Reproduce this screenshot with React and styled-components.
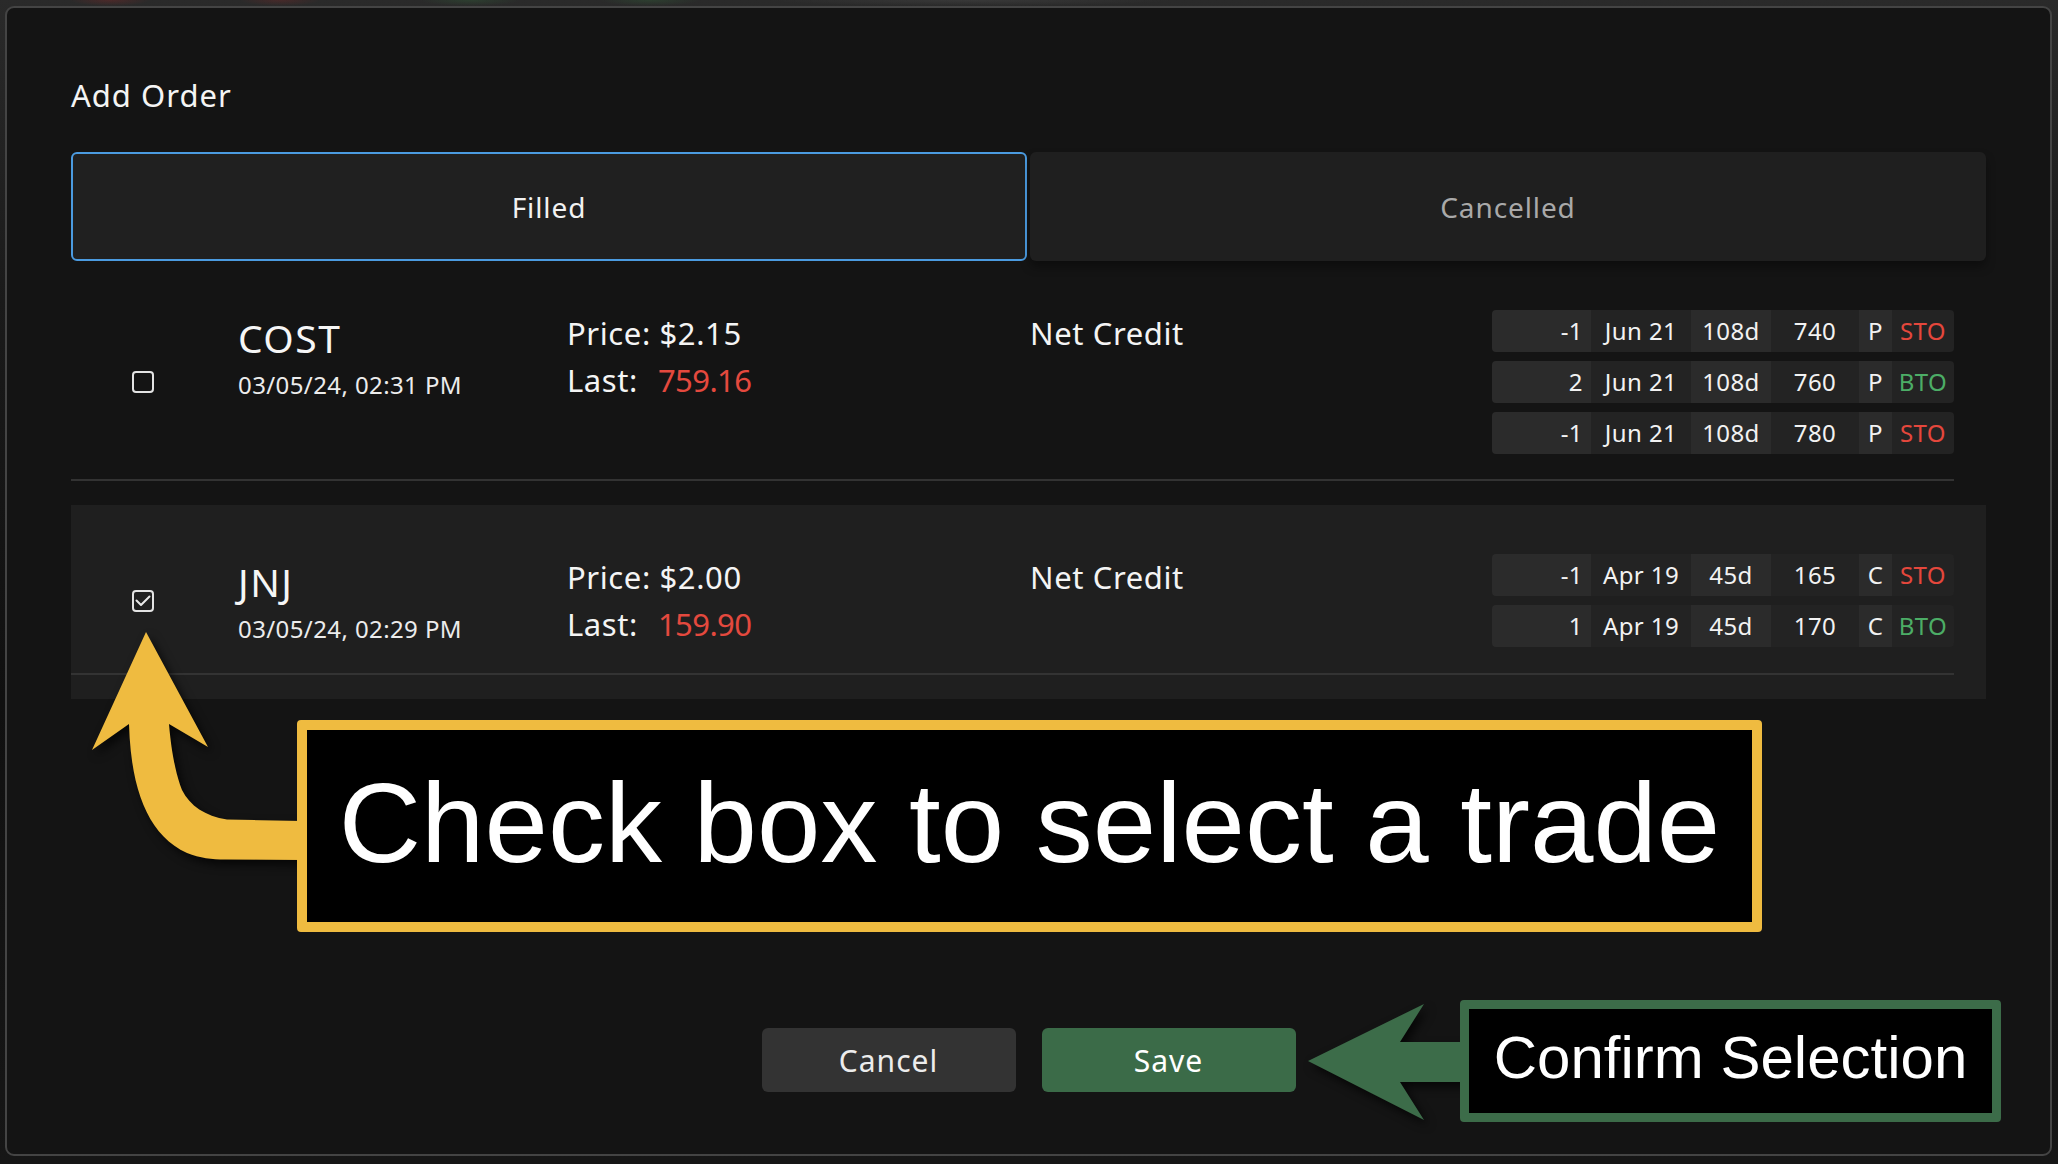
import React, { useState } from 'react'
import styled, { createGlobalStyle, css } from 'styled-components'

const GlobalStyle = createGlobalStyle`
  html, body {
    margin: 0;
    padding: 0;
    background: #0d0d0d;
  }
  * {
    box-sizing: border-box;
  }
  body {
    font-family: "Noto Sans", "Open Sans", sans-serif;
    color: #f0f0f0;
  }
`

const orders = [
  {
    id: 'cost',
    ticker: 'COST',
    time: '03/05/24, 02:31 PM',
    price: '$2.15',
    last: '759.16',
    kind: 'Net Credit',
    legs: [
      { qty: '-1', exp: 'Jun 21', dte: '108d', strike: '740', type: 'P', action: 'STO' },
      { qty: '2', exp: 'Jun 21', dte: '108d', strike: '760', type: 'P', action: 'BTO' },
      { qty: '-1', exp: 'Jun 21', dte: '108d', strike: '780', type: 'P', action: 'STO' },
    ],
  },
  {
    id: 'jnj',
    ticker: 'JNJ',
    time: '03/05/24, 02:29 PM',
    price: '$2.00',
    last: '159.90',
    kind: 'Net Credit',
    legs: [
      { qty: '-1', exp: 'Apr 19', dte: '45d', strike: '165', type: 'C', action: 'STO' },
      { qty: '1', exp: 'Apr 19', dte: '45d', strike: '170', type: 'C', action: 'BTO' },
    ],
  },
]

const AddOrder = () => {
  const [activeTab, setActiveTab] = useState('Filled')
  const [selected, setSelected] = useState('jnj')
  const tabs = ['Filled', 'Cancelled']

  return (
    <Page>
      <GlobalStyle />
      <Dialog>
        <Title>Add Order</Title>

        <Tabs>
          {tabs.map(tab => (
            <Tab key={tab} $active={activeTab === tab} onClick={() => setActiveTab(tab)}>{tab}</Tab>
          ))}
        </Tabs>

        <OrderList>
          {orders.map(order => (
            <OrderRow key={order.id} $selected={selected === order.id}>
              <RowBody>
                <CheckBox $checked={selected === order.id} onClick={() => setSelected(order.id)}>
                  {selected === order.id && (
                    <svg viewBox="0 0 22 22" width="22" height="22">
                      <polyline points="4.5,10.5 9,15 17.5,6.5" fill="none" stroke="#e8e8e8" strokeWidth="2" strokeLinecap="round" strokeLinejoin="round" />
                    </svg>
                  )}
                </CheckBox>

                <TickerCol>
                  <Ticker>{order.ticker}</Ticker>
                  <Time>{order.time}</Time>
                </TickerCol>

                <PriceCol>
                  <div>Price: {order.price}</div>
                  <div>Last:<LastValue>{order.last}</LastValue></div>
                </PriceCol>

                <PriceCol>
                  <div>{order.kind}</div>
                </PriceCol>

                <Legs>
                  {order.legs.map((leg, i) => (
                    <Leg key={i}>
                      <Cell $align="right">{leg.qty}</Cell>
                      <Cell>{leg.exp}</Cell>
                      <Cell>{leg.dte}</Cell>
                      <Cell>{leg.strike}</Cell>
                      <Cell>{leg.type}</Cell>
                      <Cell $action={leg.action}>{leg.action}</Cell>
                    </Leg>
                  ))}
                </Legs>
              </RowBody>
            </OrderRow>
          ))}
        </OrderList>

        <Footer>
          <Button>Cancel</Button>
          <Button $primary>Save</Button>
        </Footer>

        {/* tutorial callouts laid over the dialog */}
        <ArrowSvg $left={78} $top={617} width="225" height="255" viewBox="85 625 225 255">
          <path
            d="M146 632 L208 747 L169 724 C171 748 175 772 182 790 C190 806 205 816 227 819.5 L302 821 L302 860 L225 859.5 C212 859.5 200 858 187 853 C148 835 131 790 129 724 L92 750 Z"
            fill="#efbb40"
          />
        </ArrowSvg>
        <Callout $left={290} $top={712} $width={1465} $height={212} $border={10} $color="#efbb40" $size={114}>
          Check box to select a trade
        </Callout>

        <ArrowSvg $left={1293} $top={987} width="175" height="140" viewBox="1300 995 175 140">
          <path d="M1308 1061 L1424 1004 L1400 1042 L1470 1042 L1470 1082 L1400 1082 L1424 1120 Z" fill="#3c6c49" />
        </ArrowSvg>
        <Callout $left={1453} $top={992} $width={541} $height={122} $border={9} $color="#3c6c49" $size={60}>
          Confirm Selection
        </Callout>
      </Dialog>
    </Page>
  )
}

export default AddOrder

const Page = styled.div`
  width: 2058px;
  height: 1164px;
  padding: 6px 6px 8px 5px;
  background:
    radial-gradient(ellipse 40px 6px at 110px 0, rgba(140, 40, 40, 0.35), transparent),
    radial-gradient(ellipse 40px 6px at 280px 0, rgba(140, 40, 40, 0.3), transparent),
    radial-gradient(ellipse 50px 6px at 470px 0, rgba(50, 110, 60, 0.3), transparent),
    radial-gradient(ellipse 50px 6px at 650px 0, rgba(50, 110, 60, 0.3), transparent),
    radial-gradient(ellipse 200px 6px at 970px 0, rgba(90, 90, 90, 0.3), transparent),
    linear-gradient(180deg, #2a2a2a 0px, #1a1a1a 300px, #101010 700px, #161616 1164px);
`

const Dialog = styled.div`
  position: relative;
  width: 2047px;
  height: 1150px;
  display: flex;
  flex-direction: column;
  padding: 67px 64px 62px;
  background: #141414;
  border: 2px solid #444444;
  border-radius: 9px;
`

const Title = styled.h1`
  margin: 0 0 37px;
  font-size: 31px;
  line-height: 40px;
  font-weight: 400;
  letter-spacing: 1px;
  color: #f4f4f4;
`

const Tabs = styled.div`
  display: flex;
  gap: 3px;
`

const Tab = styled.button`
  flex: 1;
  height: 109px;
  border: 2px solid transparent;
  border-radius: 6px;
  background: #1f1f1f;
  color: #a9a9a9;
  font-family: inherit;
  font-size: 28px;
  letter-spacing: 0.9px;
  cursor: pointer;
  box-shadow: 0 6px 10px rgba(0, 0, 0, 0.35);

  ${p => p.$active && css`
    background: #202020;
    border-color: #4b9be0;
    color: #f2f2f2;
    box-shadow: none;
  `}
`

const OrderList = styled.div`
  flex: 1;
  display: flex;
  flex-direction: column;
`

const OrderRow = styled.div`
  padding-bottom: 24px;
  background: ${p => (p.$selected ? '#1f1f1f' : 'transparent')};
`

const RowBody = styled.div`
  display: grid;
  grid-template-columns: 167px 329px 463px 1fr 462px;
  margin-right: 32px;
  padding: 49px 0 25px;
  border-bottom: 2px solid #333333;
`

const CheckBox = styled.span`
  align-self: center;
  margin-left: 61px;
  width: 22px;
  height: 22px;
  border: 2px solid #e3e3e3;
  border-radius: 4px;
  cursor: pointer;
  position: relative;

  svg {
    position: absolute;
    left: -2px;
    top: -2px;
  }
`

const TickerCol = styled.div`
  align-self: start;
  padding-top: 5px;
`

const Ticker = styled.div`
  font-size: 39px;
  line-height: 45px;
  letter-spacing: 1.5px;
  color: #f6f6f6;
`

const Time = styled.div`
  margin-top: 10px;
  font-size: 24px;
  line-height: 30px;
  letter-spacing: 0.4px;
  color: #ececec;
`

const PriceCol = styled.div`
  align-self: start;
  font-size: 31px;
  line-height: 47px;
  letter-spacing: 0.6px;
  color: #f4f4f4;
`

const LastValue = styled.span`
  margin-left: 20px;
  letter-spacing: -0.6px;
  color: #e4493e;
`

const Legs = styled.div`
  display: flex;
  flex-direction: column;
  gap: 9px;
`

const Leg = styled.div`
  display: grid;
  grid-template-columns: 99px 100px 80px 88px 33px 62px;
  height: 42px;
  border-radius: 4px;
  overflow: hidden;

  & > span:nth-child(odd) {
    background: #2b2b2b;
  }
  & > span:nth-child(even) {
    background: #232323;
  }
`

const Cell = styled.span`
  font-size: 24px;
  line-height: 42px;
  letter-spacing: 0.4px;
  text-align: ${p => (p.$align === 'right' ? 'right' : 'center')};
  padding-right: ${p => (p.$align === 'right' ? '8px' : '0')};
  color: ${p => (p.$action === 'STO' ? '#e5473c' : p.$action === 'BTO' ? '#4cad66' : '#f2f2f2')};
`

const Footer = styled.div`
  display: flex;
  justify-content: center;
  gap: 26px;
`

const Button = styled.button`
  width: 254px;
  height: 64px;
  border: none;
  border-radius: 6px;
  background: ${p => (p.$primary ? '#3b6b48' : '#333333')};
  color: ${p => (p.$primary ? '#ffffff' : '#ececec')};
  font-family: inherit;
  font-size: 30px;
  letter-spacing: 1px;
  cursor: pointer;
`

const ArrowSvg = styled.svg`
  position: absolute;
  left: ${p => p.$left}px;
  top: ${p => p.$top}px;
  overflow: visible;
  pointer-events: none;
  filter: drop-shadow(4px 5px 5px rgba(0, 0, 0, 0.7));
`

const Callout = styled.div`
  position: absolute;
  left: ${p => p.$left}px;
  top: ${p => p.$top}px;
  width: ${p => p.$width}px;
  height: ${p => p.$height}px;
  display: flex;
  align-items: center;
  justify-content: center;
  padding-bottom: 6px;
  background: #000000;
  border: ${p => p.$border}px solid ${p => p.$color};
  border-radius: 4px;
  font-family: "Liberation Sans", Arial, sans-serif;
  font-size: ${p => p.$size}px;
  line-height: 1;
  color: #ffffff;
  white-space: nowrap;
`
